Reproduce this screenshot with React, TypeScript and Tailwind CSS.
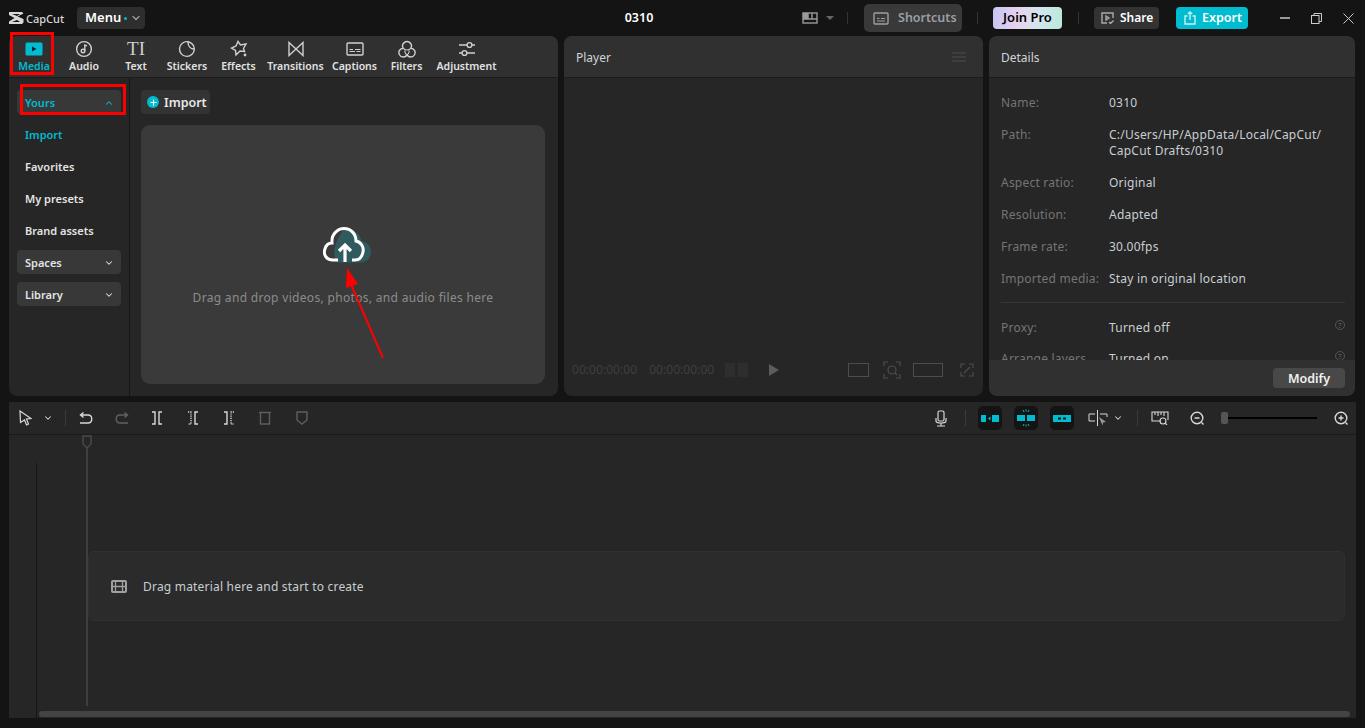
import { ChevronDown, ChevronUp, Plus } from 'lucide-react';

const stroke = { fill: 'none', stroke: 'currentColor', strokeWidth: 1.4 };

function MediaIcon() {
  return (
    <svg width="18" height="14" viewBox="0 0 18 14">
      <rect x="0.5" y="0.5" width="17" height="13" rx="1.5" fill="#00bcd0" />
      <path d="M7 4.5 L11.5 7 L7 9.5 Z" fill="#123" />
    </svg>
  );
}

function AudioIcon() {
  return (
    <svg width="18" height="18" viewBox="0 0 18 18" {...stroke}>
      <circle cx="9" cy="9" r="7.4" />
      <circle cx="8" cy="11" r="1.8" />
      <path d="M9.8 11 V5 L12 5.8" />
    </svg>
  );
}

function StickerIcon() {
  return (
    <svg width="18" height="18" viewBox="0 0 18 18" {...stroke}>
      <path d="M10 1.7 A7.4 7.4 0 1 0 16.3 9 C12.5 9 10 6 10 1.7 Z" />
      <path d="M10 1.7 A7.4 7.4 0 0 1 16.3 9" />
    </svg>
  );
}

function EffectsIcon() {
  return (
    <svg width="18" height="18" viewBox="0 0 18 18" {...stroke}>
      <path d="M8 1.5 L10.5 5 L16 4 L13.5 8.5 L14.5 11.5 L10 11 L6 15 L5.5 10.5 L1.5 8 L6 6 Z" />
      <circle cx="15" cy="15" r="0.7" fill="currentColor" />
    </svg>
  );
}

function TransitionIcon() {
  return (
    <svg width="18" height="16" viewBox="0 0 18 16" {...stroke}>
      <path d="M2 1.5 V14.5 L9 8 L2 1.5 Z M16 1.5 V14.5 L9 8 L16 1.5 Z" />
    </svg>
  );
}

function CaptionIcon() {
  return (
    <svg width="18" height="14" viewBox="0 0 18 14" {...stroke}>
      <rect x="1" y="1" width="16" height="12" rx="1" />
      <path d="M3.5 9.5 H9 M10.5 9.5 H14.5 M3.5 7.5 H7 M9 7.5 H14.5" strokeWidth="1" />
    </svg>
  );
}

function FilterIcon() {
  return (
    <svg width="18" height="18" viewBox="0 0 18 18" {...stroke}>
      <path d="M5.2 8.2 A4.4 4.4 0 1 1 12.8 8.2 A4.4 4.4 0 1 1 9 15 A4.4 4.4 0 1 1 5.2 8.2 Z" />
      <path d="M5.2 8.2 C6.5 10.5 11.5 10.5 12.8 8.2 M9 15 C7 13.5 6.5 11.5 7.3 9.8 M9 15 C11 13.5 11.5 11.5 10.7 9.8" strokeWidth="1.1" />
    </svg>
  );
}

function AdjustIcon() {
  return (
    <svg width="18" height="18" viewBox="0 0 18 18" {...stroke}>
      <path d="M1 5 H9 M14 5 H17 M1 13 H4 M9 13 H17" />
      <circle cx="11.5" cy="5" r="2.4" />
      <circle cx="6.5" cy="13" r="2.4" />
    </svg>
  );
}

const tabs = [
  { label: 'Media', width: 'w-[50px]', icon: <MediaIcon />, active: true },
  { label: 'Audio', width: 'w-[50px]', icon: <AudioIcon /> },
  { label: 'Text', width: 'w-[54px]', icon: <span className="font-['Liberation_Serif',serif] text-[19px] leading-[18px]">TI</span> },
  { label: 'Stickers', width: 'w-[48px]', icon: <StickerIcon /> },
  { label: 'Effects', width: 'w-[55px]', icon: <EffectsIcon /> },
  { label: 'Transitions', width: 'w-[59px]', icon: <TransitionIcon /> },
  { label: 'Captions', width: 'w-[59px]', icon: <CaptionIcon /> },
  { label: 'Filters', width: 'w-[45px]', icon: <FilterIcon /> },
  { label: 'Adjustment', width: 'w-[75px]', icon: <AdjustIcon /> },
];

const details = [
  { label: 'Name:', value: '0310' },
  { label: 'Path:', value: 'C:/Users/HP/AppData/Local/CapCut/\nCapCut Drafts/0310' },
  { label: 'Aspect ratio:', value: 'Original' },
  { label: 'Resolution:', value: 'Adapted' },
  { label: 'Frame rate:', value: '30.00fps' },
  { label: 'Imported media:', value: 'Stay in original location' },
];

function TopBar() {
  return (
    <div className="flex h-[36px] shrink-0 items-center pl-[9px]">
      <div className="flex w-[68px] items-center gap-[2px] text-[#d8d8d8]">
        <svg width="15" height="12" viewBox="0 0 15 12" fill="currentColor">
          <path d="M0 0 H13 L14.5 1.5 L8.5 4.5 L14.5 7 V10.5 L13 12 H0 V9.5 L5.5 6 L0 3 Z M3 2 L8 4 L11 2 Z M3 10 H11 L8 8 Z" fillRule="evenodd" />
        </svg>
        <span className="text-[11px] font-medium leading-none">CapCut</span>
      </div>
      <div className="flex h-[22px] w-[68px] items-center rounded-[4px] bg-[#2e2e2e] pl-[8px] text-[13px] font-semibold text-white">
        Menu
        <span className="ml-[3px] size-[3px] rounded-full bg-[#00bcd0]" />
        <ChevronDown className="ml-[3px] text-[#a0a0a0]" size={12} strokeWidth={2.5} />
      </div>
      <div className="ml-[478px] w-[32px] text-center text-[12.5px] font-semibold text-white">0310</div>
      <svg width="16" height="12" viewBox="0 0 16 12" className="ml-[147px] text-[#999]" {...stroke}>
        <rect x="1" y="1" width="14" height="10" />
        <path d="M1 7 H15 M6 1 V7 M10 1 V7" />
        <rect x="1.5" y="1.5" width="4" height="5" fill="currentColor" />
      </svg>
      <div className="ml-[8px] mr-[13px] h-0 w-0 border-x-[4px] border-t-[4px] border-x-transparent border-t-[#666]" />
      <div className="h-[12px] w-px bg-[#333]" />
      <div className="ml-[16px] flex h-[28px] w-[98px] items-center rounded-[5px] bg-[#393939] pl-[9px] text-[12.5px] font-semibold text-[#9a9fa5]">
        <svg width="16" height="13" viewBox="0 0 16 13" className="mr-[9px]" {...stroke}>
          <rect x="1" y="1" width="14" height="11" rx="1" />
          <path d="M4 6.5 H6.5 M8 6.5 H12 M4 9 H12" strokeWidth="1" />
        </svg>
        Shortcuts
      </div>
      <div className="mx-[15px] h-[12px] w-px bg-[#333]" />
      <div className="flex h-[22px] w-[69px] items-center justify-center rounded-[4px] bg-[linear-gradient(100deg,#c6c3f3,#e6d3ee_35%,#d4e6ee_65%,#b9e9da)] text-[13px] font-semibold text-black">
        Join Pro
      </div>
      <div className="ml-[16px] mr-[15px] h-[12px] w-px bg-[#333]" />
      <div className="flex h-[22px] w-[65px] items-center rounded-[4px] bg-[#333] pl-[7px] text-[12px] font-semibold text-white">
        <svg width="13" height="12" viewBox="0 0 13 12" className="mr-[6px] text-[#aaa]" {...stroke}>
          <path d="M12 6 V1 H1 V11 H6" />
          <path d="M5 4 L8 6 L5 8 Z" />
          <path d="M8 10 L9.5 11.5 L12.5 8.5" />
        </svg>
        Share
      </div>
      <div className="ml-[17px] flex h-[22px] w-[72px] items-center rounded-[4px] bg-[#00bcd0] pl-[8px] text-[12.5px] font-semibold text-white">
        <svg width="12" height="14" viewBox="0 0 12 14" className="mr-[6px] text-[#c8f2f6]" {...stroke}>
          <path d="M3.5 5 H1 V13 H11 V5 H8.5" />
          <path d="M6 9 V1 M3.8 3 L6 1 L8.2 3" />
        </svg>
        Export
      </div>
      <div className="ml-[32px] h-[1.5px] w-[10px] bg-[#999]" />
      <svg width="11" height="11" viewBox="0 0 11 11" className="ml-[21px] text-[#ccc]" fill="none" stroke="currentColor">
        <rect x="0.5" y="2.5" width="7.5" height="8" />
        <path d="M3 2.5 V0.5 H10.5 V8.5 H8" />
      </svg>
      <svg width="11" height="11" viewBox="0 0 11 11" className="ml-[21px] text-[#ccc]" fill="none" stroke="currentColor">
        <path d="M0.5 0.5 L10.5 10.5 M10.5 0.5 L0.5 10.5" />
      </svg>
    </div>
  );
}

function MediaPanel() {
  return (
    <div className="flex w-[549px] flex-col overflow-hidden rounded-[8px] bg-[#262626]">
      <div className="flex h-[42px] shrink-0 items-start border-b border-[#1c1c1c] bg-[#303030]">
        {tabs.map((tab) => (
          <div
            key={tab.label}
            className={`flex h-[41px] shrink-0 ${tab.width} flex-col items-center pt-[4px] ${tab.active ? 'text-[#00bcd0]' : 'text-[#cfcfcf]'}`}
          >
            <div className="flex h-[18px] items-center">{tab.icon}</div>
            <div className={`whitespace-nowrap text-[10.5px] font-semibold leading-[16px] ${tab.active ? 'text-[#00bcd0]' : 'text-[#e2e2e2]'}`}>
              {tab.label}
            </div>
          </div>
        ))}
      </div>
      <div className="flex flex-1">
        <div className="flex w-[121px] shrink-0 flex-col border-r border-[#161616] px-[8px] pt-[12px] text-[11px] font-semibold text-[#e4e4e4]">
          <div className="flex h-[24px] items-center justify-between rounded-[4px] bg-[#383838] pl-[8px] pr-[7px] pt-[2px] text-[#00bcd0]">
            Yours
            <ChevronUp size={10} strokeWidth={2.5} />
          </div>
          <div className="mt-[5px] flex h-[32px] items-center pl-[8px] text-[#00bcd0]">Import</div>
          <div className="flex h-[32px] items-center pl-[8px]">Favorites</div>
          <div className="flex h-[32px] items-center pl-[8px]">My presets</div>
          <div className="flex h-[32px] items-center pl-[8px]">Brand assets</div>
          <div className="mt-[3px] flex h-[24px] items-center justify-between rounded-[4px] bg-[#383838] pl-[8px] pr-[7px] pt-[2px]">
            Spaces
            <ChevronDown size={10} strokeWidth={2.5} />
          </div>
          <div className="mt-[8px] flex h-[24px] items-center justify-between rounded-[4px] bg-[#383838] pl-[8px] pr-[7px] pt-[2px]">
            Library
            <ChevronDown size={10} strokeWidth={2.5} />
          </div>
        </div>
        <div className="flex flex-1 flex-col pb-[12px] pl-[11px] pr-[13px] pt-[12px]">
          <div className="flex h-[24px] w-[69px] items-center rounded-[4px] bg-[#333] pl-[6px] text-[12.5px] font-semibold text-[#e8e8e8]">
            <span className="mr-[5px] flex size-[12px] items-center justify-center rounded-full bg-[#00bcd0] text-white">
              <Plus size={9} strokeWidth={3} />
            </span>
            <span className="pt-[2px]">Import</span>
          </div>
          <div className="mt-[11px] flex flex-1 flex-col items-center rounded-[9px] bg-[#3a3a3a] pt-[102px]">
            <svg width="48" height="36" viewBox="0 0 48 36" className="ml-[8px]">
              <path d="M20 3 C30 1 37 6 38.5 14 C45 15 48 20 48 25 C48 31 43 35.5 38 35.5 H14 C10 30 9 20 20 3 Z" fill="#2f5a5e" />
              <path d="M15 33 H10 C3 33 0 27 2 22 C3 18 6 16 9 16 C8 7 15 1.5 21 1.5 C28 1.5 33 7 33 14 C38 15 41 20 40 25 C39 30 36 33 32 33 H29" fill="none" stroke="#fff" strokeWidth="3" />
              <path d="M22 35 V18 M16 24 L22 18 L28 24" fill="none" stroke="#fff" strokeWidth="3.2" />
            </svg>
            <div className="mt-[27px] text-[12px] leading-[16px] tracking-[0.32px] text-[#8c8c8c]">Drag and drop videos, photos, and audio files here</div>
          </div>
        </div>
      </div>
    </div>
  );
}

function PlayerPanel() {
  return (
    <div className="flex w-[419px] flex-col overflow-hidden rounded-[8px] bg-[#262626]">
      <div className="flex h-[42px] shrink-0 items-center justify-between border-b border-[#1c1c1c] bg-[#303030] pl-[12px] pr-[17px]">
        <span className="pt-[2px] text-[12px] text-[#cfd4d8]">Player</span>
        <svg width="14" height="10" viewBox="0 0 14 10" stroke="#4c4c4c">
          <path d="M0 1 H14 M0 5 H14 M0 9 H14" />
        </svg>
      </div>
      <div className="flex-1" />
      <div className="flex h-[36px] shrink-0 items-start pl-[8px] text-[12px] tracking-[0.05px] text-[#3f3f3f]">
        <div className="flex h-[20px] items-center gap-[12px]">
          <span>00:00:00:00</span>
          <span>00:00:00:00</span>
        </div>
        <svg width="23" height="16" viewBox="0 0 23 16" className="ml-[11px] mt-[2px]" fill="#2e2e2e">
          <path d="M0 1 H10 V15 H0 Z M13 1 H23 V15 H13 Z" />
        </svg>
        <div className="ml-[21px] mt-[4px] h-0 w-0 border-y-[6px] border-l-[10px] border-y-transparent border-l-[#5c5c5c]" />
        <div className="ml-[69px] mt-[3px] h-[14px] w-[21px] border border-[#4d4d4d]" />
        <svg width="18" height="18" viewBox="0 0 18 18" className="ml-[14px] mt-[1px]" fill="none" stroke="#4d4d4d" strokeWidth="1.2">
          <path d="M1 5 V1 H5 M13 1 H17 V5 M17 13 V17 H13 M5 17 H1 V13" />
          <circle cx="9" cy="9" r="4" />
          <path d="M12 12 L14 14" />
        </svg>
        <div className="ml-[12px] mt-[3px] h-[14px] w-[30px] border border-[#4d4d4d]" />
        <svg width="14" height="14" viewBox="0 0 14 14" className="ml-[17px] mt-[3px]" fill="none" stroke="#4d4d4d" strokeWidth="1.2">
          <path d="M1 5 V1 H5 M9 1 H13 V5 M13 9 V13 H9 M5 13 H1 V9 M4 10 L10 4" />
        </svg>
      </div>
    </div>
  );
}

function HelpIcon() {
  return (
    <span className="flex size-[10px] items-center justify-center rounded-full border border-[#555] text-[7px] leading-none text-[#666]">?</span>
  );
}

function DetailsPanel() {
  return (
    <div className="flex w-[366px] flex-col overflow-hidden rounded-[8px] bg-[#262626]">
      <div className="flex h-[42px] shrink-0 items-center border-b border-[#1c1c1c] bg-[#303030] pl-[12px]">
        <span className="pt-[2px] text-[12px] text-[#cfd4d8]">Details</span>
      </div>
      <div className="flex-1 overflow-hidden pl-[12px] pr-[10px] pt-[9px] text-[12px] leading-[16px] tracking-[0.22px]">
        {details.map((row) => (
          <div key={row.label} className="flex pb-[8px] pt-[8px]">
            <div className="w-[108px] shrink-0 text-[#757575]">{row.label}</div>
            <div className="whitespace-pre-line text-[#c8ced3]">{row.value}</div>
          </div>
        ))}
        <div className="mt-[7px] border-t border-[#353535]" />
        <div className="mt-[9px] flex h-[32px] items-start pt-[8px]">
          <div className="w-[108px] shrink-0 text-[#757575]">Proxy:</div>
          <div className="flex-1 text-[#c8ced3]">Turned off</div>
          <div><HelpIcon /></div>
        </div>
        <div className="flex items-start pt-[7px]">
          <div className="w-[108px] shrink-0 text-[#757575]">Arrange layers</div>
          <div className="flex-1 text-[#c8ced3]">Turned on</div>
          <div><HelpIcon /></div>
        </div>
      </div>
      <div className="flex h-[36px] shrink-0 items-center justify-end bg-[#303030] pr-[10px]">
        <div className="flex h-[20px] w-[72px] items-center justify-center rounded-[4px] bg-[#484848] pt-[2px] text-[12.5px] font-semibold text-[#f0f0f0]">Modify</div>
      </div>
    </div>
  );
}

function SplitIcon({ left, right, color }: { left?: boolean; right?: boolean; color: string }) {
  return (
    <svg width="12" height="14" viewBox="0 0 12 14" fill="none" stroke={color} strokeWidth="1.4">
      <path d="M1 1 H4 V13 H1" strokeDasharray={left ? '1.2 1' : undefined} />
      <path d="M11 1 H8 V13 H11" strokeDasharray={right ? '1.2 1' : undefined} />
    </svg>
  );
}

function TimelineToolbar() {
  return (
    <div className="flex h-[33px] shrink-0 items-center border-b border-[#1a1a1a] pl-[10px] pr-[6px] text-[#d8d8d8]">
      <svg width="13" height="16" viewBox="0 0 13 16" fill="none" stroke="currentColor" strokeWidth="1.2">
        <path d="M1 1 L12 8.5 L7.5 9 L9.5 14 L7.5 15 L5.5 10 L1.5 12.5 Z" />
      </svg>
      <ChevronDown size={10} strokeWidth={2.5} className="ml-[11px]" />
      <div className="ml-[12px] h-[16px] w-px bg-[#3a3a3a]" />
      <svg width="14" height="12" viewBox="0 0 14 12" className="ml-[13px]" {...stroke}>
        <path d="M1 11 H9 C14 11 14 3 9 3 H2 M4.5 0.5 L1.5 3 L4.5 5.5" />
      </svg>
      <svg width="14" height="12" viewBox="0 0 14 12" className="ml-[22px] text-[#606060]" {...stroke}>
        <path d="M13 11 H5 C0 11 0 3 5 3 H12 M9.5 0.5 L12.5 3 L9.5 5.5" />
      </svg>
      <div className="ml-[22px]"><SplitIcon color="#d8d8d8" /></div>
      <div className="ml-[24px]"><SplitIcon left color="#d8d8d8" /></div>
      <div className="ml-[24px]"><SplitIcon right color="#d8d8d8" /></div>
      <svg width="14" height="14" viewBox="0 0 14 14" className="ml-[23px] text-[#5e5e5e]" {...stroke}>
        <path d="M1 1.5 H13 M2.5 1.5 V13 H11.5 V1.5" />
      </svg>
      <svg width="12" height="14" viewBox="0 0 12 14" className="ml-[24px] text-[#5e5e5e]" {...stroke}>
        <path d="M1 1 H11 V9 L6 13 L1 9 Z" />
      </svg>
      <div className="flex-1" />
      <svg width="12" height="17" viewBox="0 0 12 17" fill="none" stroke="currentColor" strokeWidth="1.2">
        <rect x="3" y="1" width="6" height="10" rx="1.5" />
        <path d="M1 8 V11 C1 13 3 13 6 13 C9 13 11 13 11 11 V8 M6 13 V16 M2 16 H10" />
      </svg>
      <div className="ml-[18px] mr-[12px] h-[16px] w-px bg-[#3a3a3a]" />
      <div className="flex size-[24px] items-center justify-center rounded-[5px] bg-[#141414]">
        <svg width="18" height="7" viewBox="0 0 18 7" fill="#00bcd0">
          <path d="M0 0 H5 V7 H0 Z M11 0 H18 V7 H11 Z M7 3.5 L9.5 1.5 V5.5 Z" />
        </svg>
      </div>
      <div className="ml-[12px] flex size-[24px] items-center justify-center rounded-[5px] bg-[#141414]">
        <svg width="18" height="18" viewBox="0 0 18 18" fill="#00bcd0">
          <path d="M0 6 H8 V12 H0 Z M10 6 H18 V12 H10 Z" />
          <path d="M6 1 L7 3 M12 1 L11 3 M9 0.5 V2.5 M6 17 L7 15 M12 17 L11 15 M9 15.5 V17.5" stroke="#00bcd0" />
        </svg>
      </div>
      <div className="ml-[12px] flex size-[24px] items-center justify-center rounded-[5px] bg-[#141414]">
        <svg width="18" height="7" viewBox="0 0 18 7" fill="#00bcd0">
          <path fillRule="evenodd" d="M0 0 H18 V7 H0 Z M5 2.5 V4.5 H8 V2.5 Z M10 2.5 V4.5 H13 V2.5 Z" />
        </svg>
      </div>
      <svg width="20" height="16" viewBox="0 0 20 16" className="ml-[14px]" fill="none" stroke="currentColor">
        <path d="M7 4 H1 V11 H7 M9.5 0 V16 M12 4 H19 V7" />
        <path d="M11 7 L18 12 L15 12.5 L14.5 15.5 Z" fill="#999" stroke="none" />
      </svg>
      <ChevronDown size={10} strokeWidth={2.5} className="ml-[5px]" />
      <div className="ml-[14px] mr-[13px] h-[16px] w-px bg-[#3a3a3a]" />
      <svg width="18" height="14" viewBox="0 0 18 14" fill="none" stroke="currentColor" strokeWidth="1.1">
        <path d="M10 10 H1 V1 H17 V9 M4 1 V4 M7 1 V5 M10 1 V4 M13 1 V5" />
        <circle cx="12" cy="10" r="3" />
        <path d="M14 12 L16 14" />
      </svg>
      <svg width="15" height="15" viewBox="0 0 15 15" className="ml-[21px]" {...stroke}>
        <circle cx="7" cy="7" r="5.8" />
        <path d="M4.5 7 H9.5 M11.5 11.5 L13.5 13.5" />
      </svg>
      <div className="relative ml-[16px] flex h-[12px] w-[96px] items-center">
        <div className="h-[2px] w-full bg-black" />
        <div className="absolute left-0 h-[12px] w-[7px] rounded-[2px] bg-[#555]" />
      </div>
      <svg width="15" height="15" viewBox="0 0 15 15" className="ml-[17px]" {...stroke}>
        <circle cx="7" cy="7" r="5.8" />
        <path d="M4.5 7 H9.5 M7 4.5 V9.5 M11.5 11.5 L13.5 13.5" />
      </svg>
    </div>
  );
}

function Timeline() {
  return (
    <div className="mx-[9px] mt-[6px] flex h-[316px] shrink-0 flex-col bg-[#262626] pr-[1px]">
      <TimelineToolbar />
      <div className="relative flex-1">
        <div className="absolute bottom-0 left-[27px] top-[28px] w-px bg-[#161616]" />
        <svg width="10" height="272" viewBox="0 0 10 272" className="absolute left-[73px] top-0" fill="none" stroke="#4a4a4a" strokeWidth="1.4">
          <path d="M1 1 H9 V9 L5 13 L1 9 Z" />
          <path d="M5 13 V271" />
        </svg>
        <div className="ml-[79px] mr-[10px] pt-[116px]">
          <div className="flex h-[70px] items-center rounded-[6px] border border-dotted border-[#363636] bg-[#2b2b2b] pl-[22px] pt-[1px] text-[12px] tracking-[0.2px] text-[#c8ced3]">
            <svg width="16" height="13" viewBox="0 0 16 13" className="mr-[16px]" fill="none" stroke="#a0a0a0" strokeWidth="2">
              <rect x="1" y="1" width="14" height="11" rx="1" />
              <path d="M1 6.5 H15 M4.5 1 V12 M11.5 1 V12" strokeWidth="1.3" />
            </svg>
            Drag material here and start to create
          </div>
        </div>
        <div className="ml-[30px] mr-[5px] mt-[90px] h-[6px] rounded-full bg-[#444]" />
      </div>
    </div>
  );
}

export default function App() {
  return (
    <div className="relative flex h-[728px] w-[1365px] flex-col overflow-hidden bg-[#141414] font-['Noto_Sans','Open_Sans',sans-serif]">
      <TopBar />
      <div className="flex h-[360px] shrink-0 gap-[6px] pl-[9px]">
        <MediaPanel />
        <PlayerPanel />
        <DetailsPanel />
      </div>
      <Timeline />

      {/* red annotations drawn on top of the screenshot */}
      <div className="absolute left-[10px] top-[32px] h-[43px] w-[44px] border-[3px] border-[#f00]" />
      <div className="absolute left-[20px] top-[84px] h-[31px] w-[106px] border-[3px] border-[#f00]" />
      <svg width="60" height="110" viewBox="0 0 60 110" className="absolute left-[335px] top-[260px]">
        <path d="M48 98 L15 22" stroke="#f00" strokeWidth="2" />
        <path d="M12 8 L23 24 L11 28 Z" fill="#f00" />
      </svg>
    </div>
  );
}
